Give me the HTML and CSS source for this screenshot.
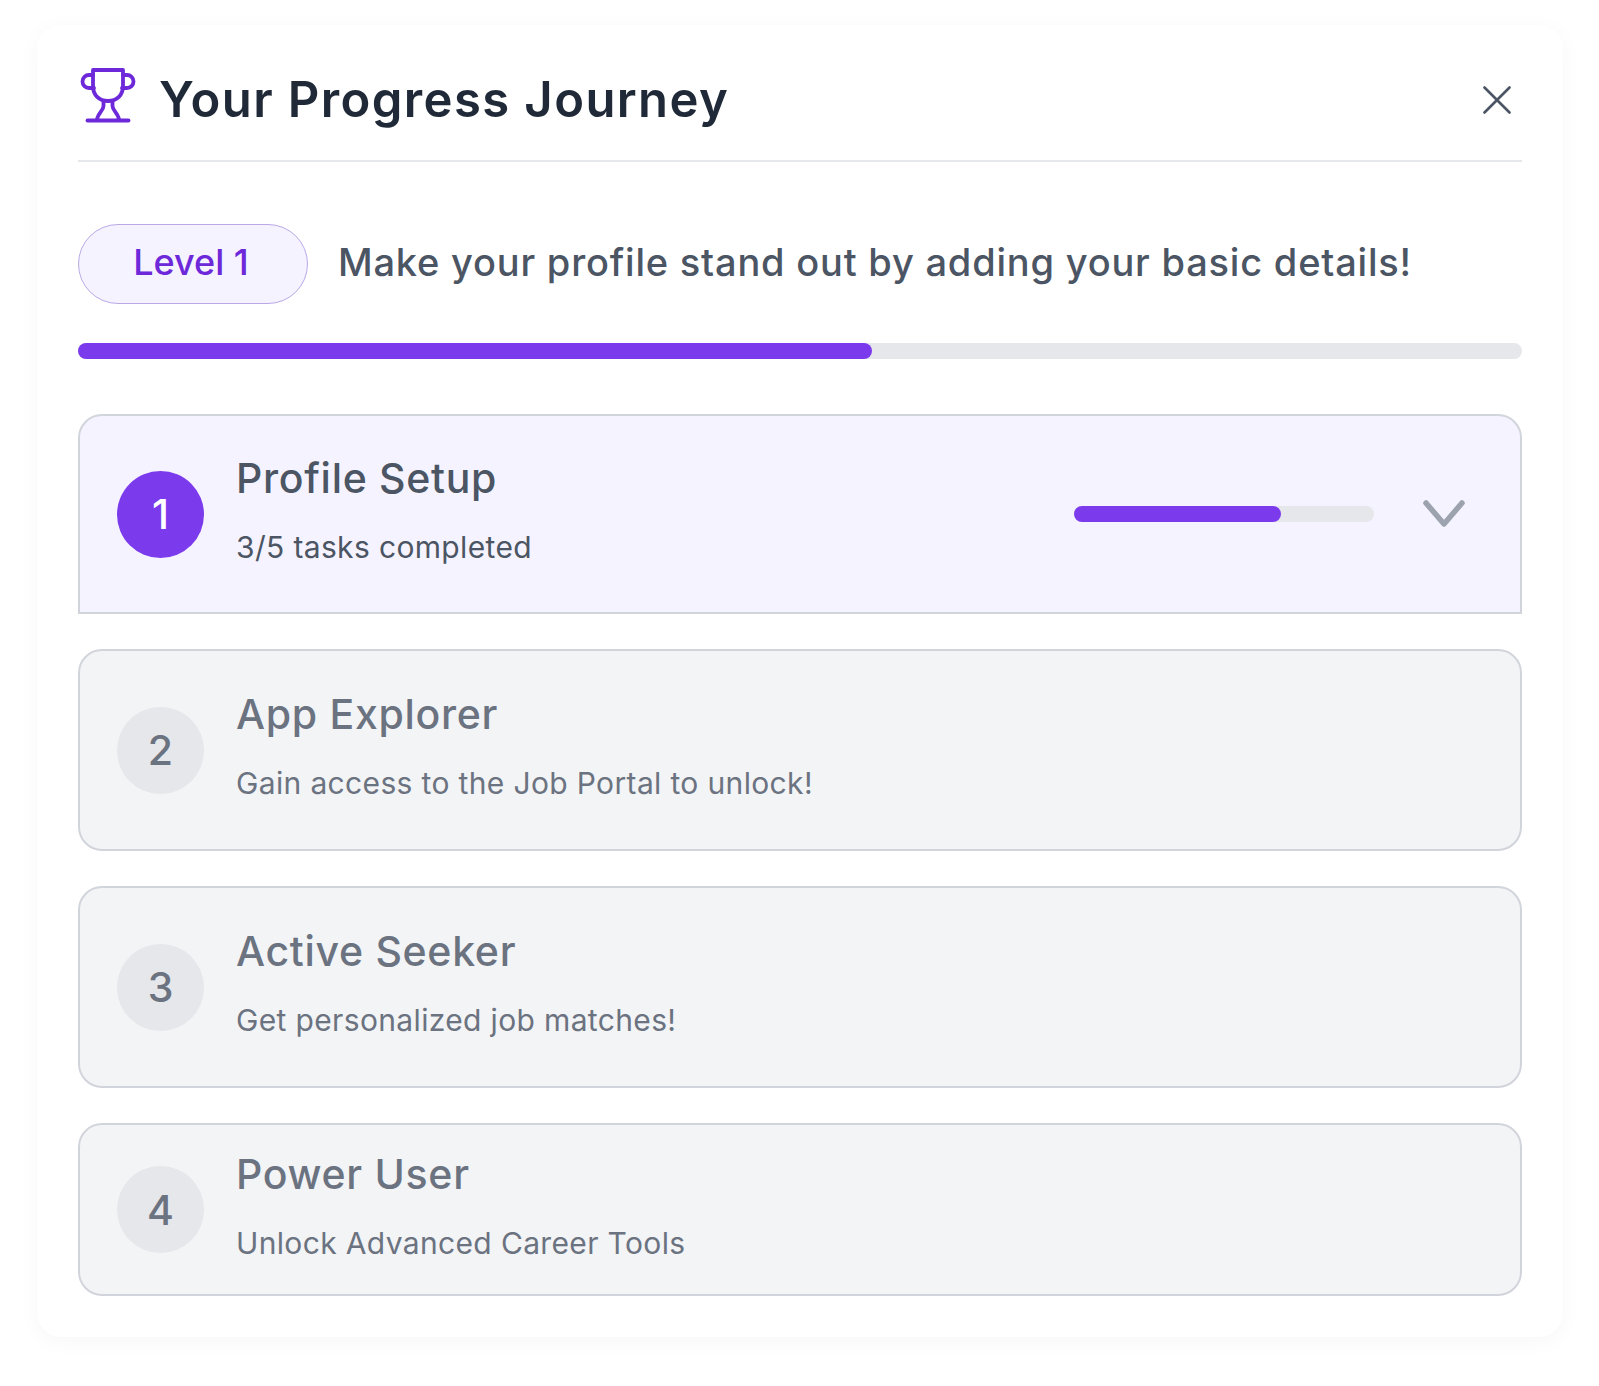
FILE: index.html
```html
<!DOCTYPE html>
<html lang="en">
<head>
    <meta charset="UTF-8">
    <meta name="viewport" content="width=device-width, initial-scale=1.0">
    <title>Your Progress Journey</title>
    <link rel="stylesheet" href="styles.css">
</head>
<body>

<div class="journey-card">
    <div class="journey-header">
        <svg class="trophy-icon" viewBox="0 0 56 56" fill="none" stroke="#6d28d9" stroke-width="3.8" stroke-linecap="round" stroke-linejoin="round">
            <path d="M13 3h30v16c0 9-6 15-15 15s-15-6-15-15z"/>
            <path d="M13 8H9a6.500 6.500 0 0 0 0 13h5"/>
            <path d="M43 8h4a6.500 6.500 0 0 1 0 13h-5"/>
            <path d="M23.500 34v5c0 5-6 7-6.500 14"/>
            <path d="M32.500 34v5c0 5 6 7 6.500 14"/>
            <path d="M7.500 53.500h41"/>
        </svg>
        <h1 class="journey-title">Your Progress Journey</h1>
        <svg class="close-icon" viewBox="0 0 28 28" fill="none" stroke="#4b5563" stroke-width="2.600" stroke-linecap="round">
            <path d="M1.500 1.500l25 25M26.500 1.500l-25 25"/>
        </svg>
    </div>

    <div class="level-row">
        <div class="level-pill">Level 1</div>
        <div class="level-text">Make your profile stand out by adding your basic details!</div>
    </div>

    <div class="main-progress">
        <div class="main-progress-fill"></div>
    </div>

    <div class="step-list">
        <div class="step step-active">
            <div class="step-number">1</div>
            <div class="step-body">
                <div class="step-title">Profile Setup</div>
                <div class="step-sub">3/5 tasks completed</div>
            </div>
            <div class="step-progress">
                <div class="step-progress-fill"></div>
            </div>
            <svg class="chevron-icon" viewBox="0 0 42 28" fill="none" stroke="#9ca3af" stroke-width="5.500" stroke-linecap="round" stroke-linejoin="round">
                <path d="M3 3l18 21 18-21"/>
            </svg>
        </div>
        <div class="step">
            <div class="step-number">2</div>
            <div class="step-body">
                <div class="step-title">App Explorer</div>
                <div class="step-sub">Gain access to the Job Portal to unlock!</div>
            </div>
        </div>
        <div class="step">
            <div class="step-number">3</div>
            <div class="step-body">
                <div class="step-title">Active Seeker</div>
                <div class="step-sub">Get personalized job matches!</div>
            </div>
        </div>
        <div class="step step-short">
            <div class="step-number">4</div>
            <div class="step-body">
                <div class="step-title">Power User</div>
                <div class="step-sub">Unlock Advanced Career Tools</div>
            </div>
        </div>
    </div>
</div>

</body>
</html>
```

FILE: styles.css
```css
body {
    font-family: Inter, "Liberation Sans", sans-serif;
    margin: 0;
    padding: 25px 36px 49px 37px;
    background-color: #fff;
}
.journey-card {
    background-color: #fff;
    border-radius: 24px;
    padding: 40px 41px 41px;
    box-shadow: 0 4px 22px rgba(0, 0, 0, 0.035);
}
.journey-header {
    display: flex;
    align-items: center;
    height: 68px;
    padding-bottom: 27px;
    border-bottom: 2px solid #e5e7eb;
}
.trophy-icon {
    width: 56px;
    height: 56px;
    margin: 0 23px 8px 2px;
}
.journey-title {
    flex: 1;
    margin: 2px 0 0;
    font-size: 49px;
    line-height: 68px;
    font-weight: 600;
    color: #1f2937;
    letter-spacing: 1.4px;
}
.close-icon {
    width: 28px;
    height: 28px;
    margin: 2px 11px 0 0;
}
.level-row {
    display: flex;
    align-items: center;
    margin-top: 62px;
    gap: 30px;
}
.level-pill {
    box-sizing: border-box;
    width: 230px;
    height: 80px;
    padding: 0 4px 4px 0;
    border: 1.5px solid #b9a9e6;
    border-radius: 40px;
    background-color: #f5f3ff;
    color: #6d28d9;
    font-size: 36px;
    font-weight: 500;
    display: flex;
    justify-content: center;
    align-items: center;
}
.level-text {
    padding-bottom: 4px;
    font-size: 38px;
    font-weight: 500;
    letter-spacing: 0.8px;
    color: #4b5563;
    white-space: nowrap;
}
.main-progress {
    height: 16px;
    margin-top: 39px;
    background-color: #e5e7eb;
    border-radius: 8px;
}
.main-progress-fill {
    width: 55%;
    height: 100%;
    background-color: #7c3aed;
    border-radius: 8px;
}
.step-list {
    display: flex;
    flex-direction: column;
    gap: 35px;
    margin-top: 55px;
}
.step {
    box-sizing: border-box;
    display: flex;
    align-items: center;
    height: 202px;
    padding: 0 37px;
    background-color: #f3f4f6;
    border: 2px solid #d1d5db;
    border-radius: 24px;
}
.step-short {
    height: 173px;
}
.step-active {
    height: 200px;
    background-color: #f5f3ff;
    border-radius: 24px 24px 0 0;
}
.step-number {
    flex: none;
    width: 87px;
    height: 87px;
    border-radius: 50%;
    background-color: #e5e7eb;
    color: #6b7280;
    font-size: 41px;
    font-weight: 500;
    display: flex;
    justify-content: center;
    align-items: center;
}
.step-active .step-number {
    background-color: #7c3aed;
    color: #fff;
}
.step-body {
    flex: 1;
    margin-left: 32px;
    padding-bottom: 9px;
}
.step-title {
    font-size: 41px;
    line-height: 54px;
    font-weight: 500;
    letter-spacing: 0.7px;
    color: #6b7280;
}
.step-active .step-title {
    color: #4b5563;
}
.step-sub {
    margin-top: 21px;
    font-size: 30px;
    line-height: 42px;
    letter-spacing: 0.35px;
    color: #6b7280;
}
.step-active .step-sub {
    color: #4b5563;
}
.step-progress {
    width: 300px;
    height: 16px;
    margin-bottom: 1px;
    background-color: #e5e7eb;
    border-radius: 8px;
}
.step-progress-fill {
    width: 69%;
    height: 100%;
    background-color: #7c3aed;
    border-radius: 8px;
}
.chevron-icon {
    width: 42px;
    height: 28px;
    margin: 0 18px 0 49px;
}
```
